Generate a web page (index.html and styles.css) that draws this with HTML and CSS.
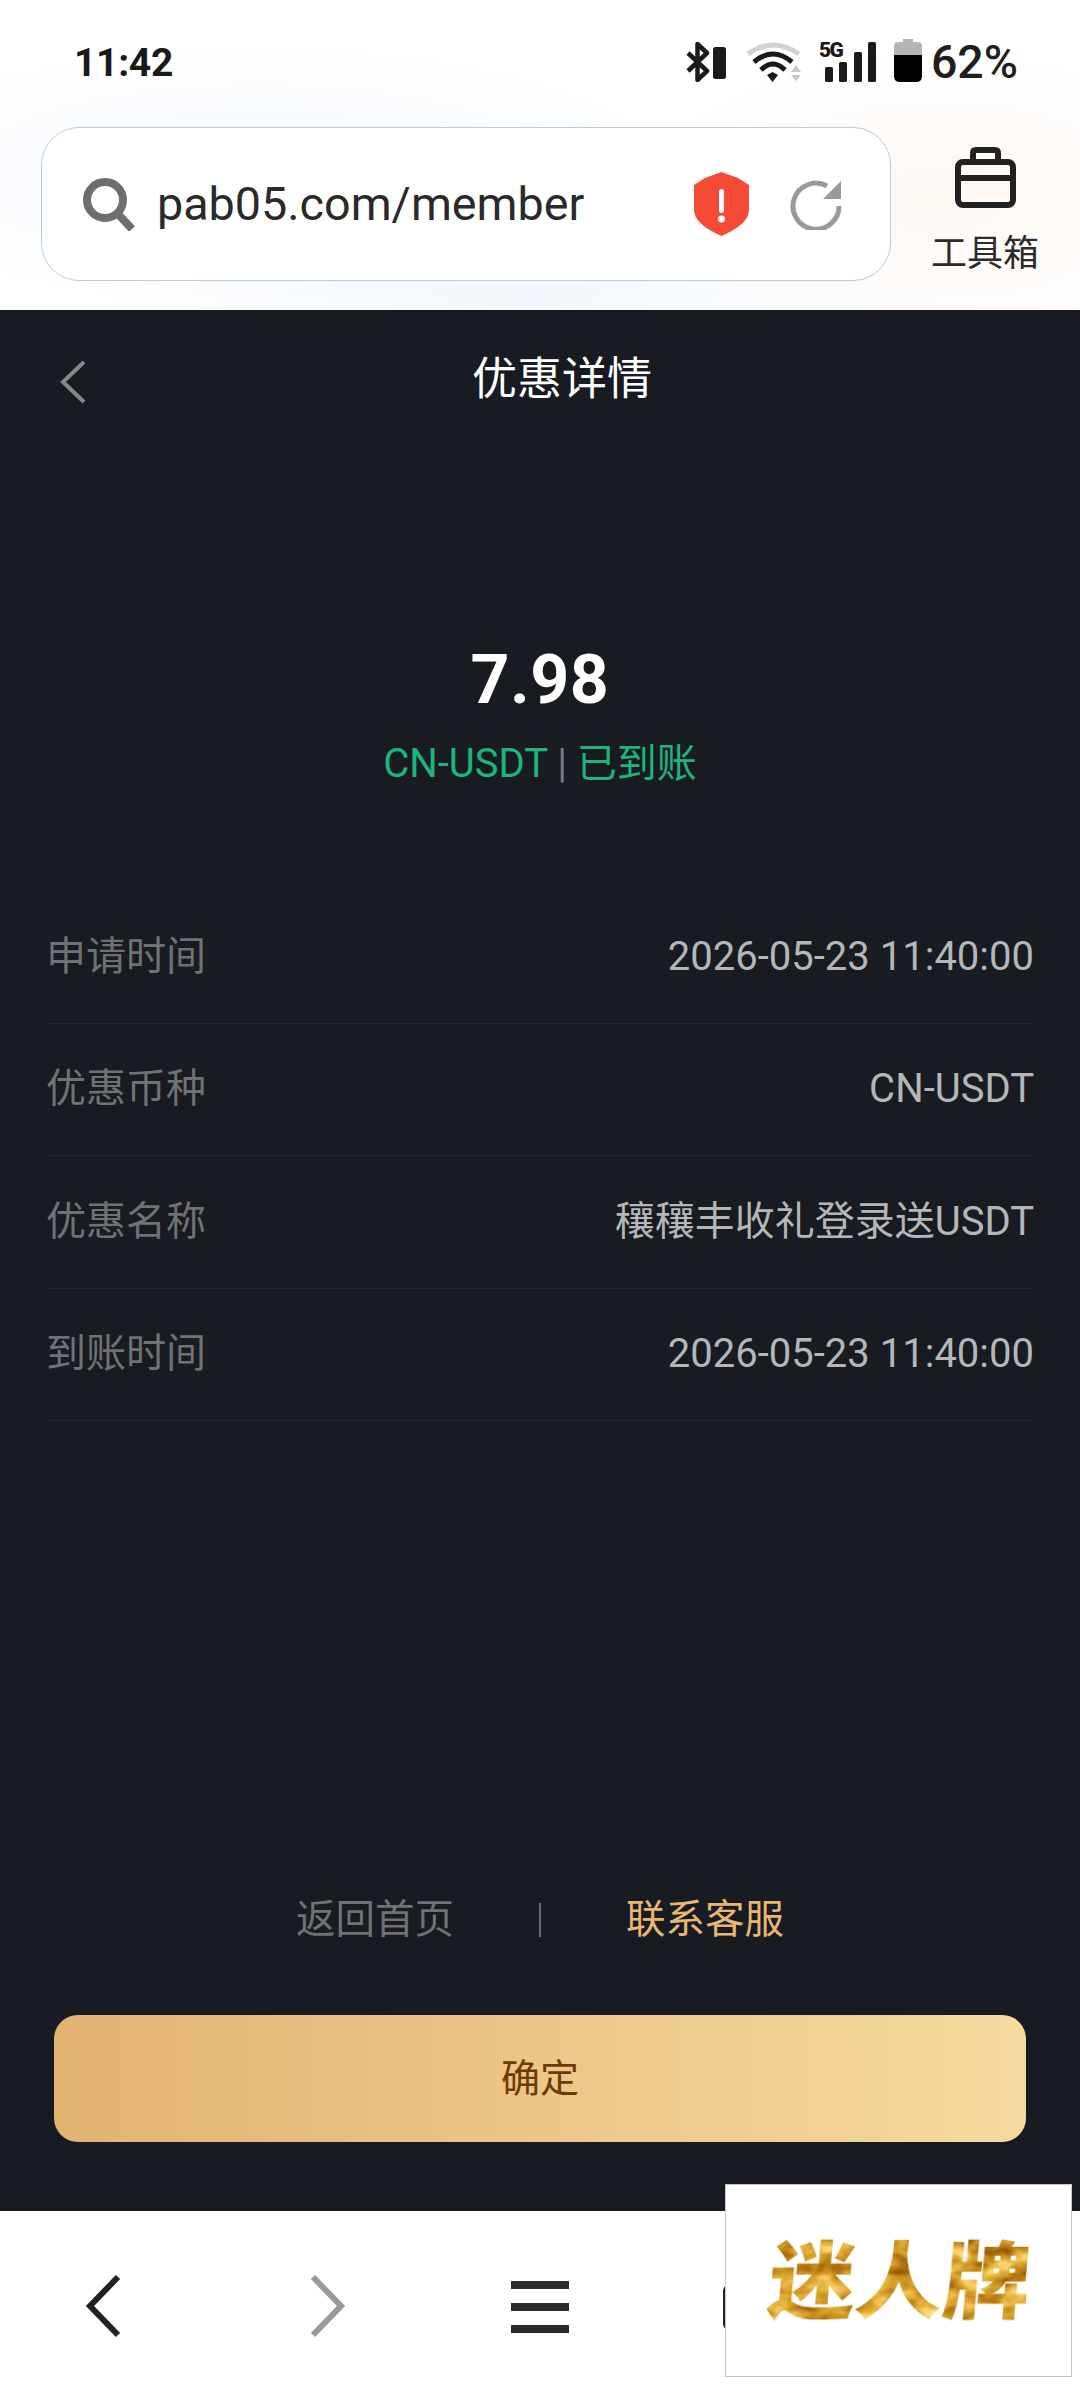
FILE: index.html
```html
<!DOCTYPE html>
<html lang="zh-CN">
<head>
<meta charset="utf-8">
<title>优惠详情</title>
<link rel="stylesheet" href="styles.css">
</head>
<body>
<div class="screen">
  <header class="top">
    <div class="status">
      <span class="time">11:42</span>
      <div class="sys">
        <svg class="ic-bt" viewBox="0 0 40 40"><path d="M2 11 21 29 11.500 38V2L21 11 2 29" fill="none" stroke="#1a1a1a" stroke-width="4.500" stroke-linejoin="round"/><rect x="27" y="5" width="13" height="32" rx="2.500" fill="#1a1a1a"/></svg>
        <svg class="ic-wifi" viewBox="0 0 55 40"><path d="M2 12Q27 -6 53 12" fill="none" stroke="#d2d2d2" stroke-width="5"/><path d="M8 20Q27 4 46 20" fill="none" stroke="#1a1a1a" stroke-width="5"/><path d="M15 28Q27 16 39 28" fill="none" stroke="#1a1a1a" stroke-width="5"/><path d="M21 33 26.500 30 32 33 26.500 40Z" fill="#1a1a1a"/><path d="M50 23 55 30H45ZM45 33H55L50 39Z" fill="#c8c8c8"/></svg>
        <div class="signal">
          <svg class="ic-signal" viewBox="0 0 57 40"><rect x="6" y="25" width="8" height="15" rx="1.500" fill="#1a1a1a"/><rect x="20" y="20" width="8" height="20" rx="1.500" fill="#1a1a1a"/><rect x="35" y="10" width="8" height="30" rx="1.500" fill="#1a1a1a"/><rect x="49" y="0" width="8" height="40" rx="1.500" fill="#1a1a1a"/></svg>
          <span class="five-g">5G</span>
        </div>
        <svg class="ic-batt" viewBox="0 0 28 43"><path d="M9 0H19V3H24Q28 3 28 7V16H0V7Q0 3 4 3H9Z" fill="#b4b4b4"/><path d="M0 16H28V37Q28 43 22 43H6Q0 43 0 37Z" fill="#000"/></svg>
        <span class="pct">62%</span>
      </div>
    </div>
    <div class="toolbar">
      <div class="urlbar">
        <svg class="ic-search" viewBox="0 0 53 53"><circle cx="22" cy="22" r="18" fill="none" stroke="#6e6e6e" stroke-width="8"/><path d="M34 35 49 51" stroke="#6e6e6e" stroke-width="8"/></svg>
        <span class="url">pab05.com/member</span>
        <svg class="ic-shield" viewBox="0 0 55 64"><path d="M27.500 0 44 6 55 13V38Q55 52 27.500 64 0 52 0 38V13L11 6Z" fill="#f44a36"/><rect x="25" y="17" width="5" height="24" rx="2.500" fill="#fff"/><circle cx="27.500" cy="47" r="3.500" fill="#fff"/></svg>
        <svg class="ic-reload" viewBox="0 0 52 51"><path d="M37 7A23 23 0 1 0 49 27" fill="none" stroke="#9a9a9a" stroke-width="5"/><path d="M51 2V20H33Z" fill="#9a9a9a"/></svg>
      </div>
      <div class="tool">
        <svg class="ic-tool" viewBox="0 0 61 61"><path d="M18 15V6Q18 3 21 3H40Q43 3 43 6V15" fill="none" stroke="#222" stroke-width="6"/><rect x="3" y="15" width="55" height="43" rx="5" fill="none" stroke="#222" stroke-width="6"/><path d="M3 31H58" stroke="#222" stroke-width="6"/></svg>
        <span class="tool-label">工具箱</span>
      </div>
    </div>
  </header>

  <main class="page">
    <div class="head">
      <svg class="ic-back" viewBox="0 0 30 46"><path d="M26 3 5 23 26 43" fill="none" stroke="#85878b" stroke-width="4"/></svg>
      <h1 class="title">优惠详情</h1>
    </div>
    <div class="amount">7.98</div>
    <div class="state"><span>CN-USDT</span> <i class="state-sep">|</i> <span>已到账</span></div>
    <dl class="rows">
      <div class="row"><dt>申请时间</dt><dd>2026-05-23 11:40:00</dd></div>
      <div class="row"><dt>优惠币种</dt><dd>CN-USDT</dd></div>
      <div class="row"><dt>优惠名称</dt><dd>穰穰丰收礼登录送USDT</dd></div>
      <div class="row"><dt>到账时间</dt><dd>2026-05-23 11:40:00</dd></div>
    </dl>
    <div class="links">
      <a class="link-home">返回首页</a>
      <span class="link-sep"></span>
      <a class="link-help">联系客服</a>
    </div>
    <button class="confirm">确定</button>
  </main>

  <nav class="nav">
    <svg class="nav-ic" viewBox="0 0 60 70"><path d="M40 6 12 35 40 64" fill="none" stroke="#222" stroke-width="6"/></svg>
    <svg class="nav-ic" viewBox="0 0 60 70"><path d="M19 6 47 35 19 64" fill="none" stroke="#999" stroke-width="6"/></svg>
    <svg class="nav-ic" viewBox="0 0 60 70"><path d="M1 14H59M1 36H59M1 58H59" stroke="#2a2a2a" stroke-width="8"/></svg>
    <span class="nav-tab"></span>
  </nav>

  <aside class="brand">
    <svg class="brand-art" viewBox="0 0 344 190">
      <defs>
        <filter id="gold" x="-5%" y="-5%" width="110%" height="110%" color-interpolation-filters="sRGB">
          <feTurbulence type="fractalNoise" baseFrequency="0.035 0.055" numOctaves="3" seed="7" result="noise"/>
          <feColorMatrix in="noise" type="matrix" values="1 0 0 0 0  1 0 0 0 0  1 0 0 0 0  0 0 0 0 1"/>
          <feComponentTransfer result="metal">
            <feFuncR type="table" tableValues="0.55 0.55 0.66 0.78 0.88 0.97 1 1"/>
            <feFuncG type="table" tableValues="0.30 0.30 0.42 0.56 0.68 0.82 0.90 0.95"/>
            <feFuncB type="table" tableValues="0.02 0.02 0.05 0.12 0.22 0.42 0.60 0.70"/>
          </feComponentTransfer>
          <feComposite in="metal" in2="SourceAlpha" operator="in"/>
        </filter>
      </defs>
      <text class="brand-text" x="51" y="127" textLength="262" lengthAdjust="spacingAndGlyphs" transform="skewX(-5)" filter="url(#gold)">迷人牌</text>
    </svg>
  </aside>
</div>
</body>
</html>
```
FILE: styles.css
```css
* { box-sizing: border-box; }
html, body { margin: 0; padding: 0; }
body {
  font-family: Roboto, "Noto Sans CJK SC", sans-serif;
  background: #fff;
}
.screen {
  position: relative;
  width: 1080px;
  height: 2400px;
  overflow: hidden;
  display: flex;
  flex-direction: column;
}

/* top browser chrome */
.top {
  height: 310px;
  flex: none;
  background:
    radial-gradient(420px 130px at 260px 175px, rgba(214, 230, 250, .32), transparent 100%),
    radial-gradient(300px 150px at 940px 200px, rgba(252, 236, 222, .38), transparent 100%),
    radial-gradient(420px 70px at 520px 292px, rgba(214, 230, 250, .30), transparent 100%),
    #fff;
}
.status {
  height: 124px;
  padding: 0 62px 0 74px;
  display: flex;
  align-items: center;
  justify-content: space-between;
}
.time {
  font-size: 39px;
  line-height: 40px;
  font-weight: 700;
  color: #1a1a1a;
  letter-spacing: -.3px;
  position: relative;
  top: 1px;
}
.sys {
  display: flex;
  align-items: flex-end;
  gap: 18px;
  margin-bottom: 3px;
}
.ic-bt { width: 40px; height: 40px; margin-right: 2px; }
.ic-wifi { width: 55px; height: 40px; }
.signal { position: relative; width: 57px; height: 40px; }
.ic-signal { display: block; width: 57px; height: 40px; }
.five-g {
  position: absolute;
  left: 0;
  top: -2px;
  font-size: 21px;
  line-height: 20px;
  font-weight: 900;
  color: #1a1a1a;
  letter-spacing: -1.5px;
}
.ic-batt { width: 28px; height: 43px; }
.pct {
  font-size: 46.500px;
  line-height: 43px;
  font-weight: 500;
  color: #1f1f1f;
  margin-left: -9px;
  position: relative;
  top: 2px;
}

.toolbar {
  display: flex;
  padding: 3px 0 0 41px;
}
.urlbar {
  width: 850px;
  height: 154px;
  padding: 0 48px 0 41px;
  display: flex;
  align-items: center;
  background: #fff;
  border: 1px solid #bccddc;
  border-radius: 38px;
}
.ic-search { width: 53px; height: 53px; flex: none; margin-top: 1px; }
.url {
  flex: 1;
  margin-left: 21px;
  font-size: 46.700px;
  line-height: 54px;
  color: #2a2a2a;
}
.ic-shield { width: 55px; height: 64px; flex: none; }
.ic-reload { width: 52px; height: 51px; flex: none; margin-left: 41px; }
.tool {
  width: 148px;
  height: 154px;
  margin-top: 20px;
  display: flex;
  flex-direction: column;
  align-items: center;
  margin-left: 20px;
}
.ic-tool { width: 61px; height: 61px; flex: none; }
.tool-label {
  margin-top: 26px;
  font-size: 36px;
  line-height: 40px;
  color: #2b2b2b;
}

/* dark page */
.page {
  flex: 1;
  display: flex;
  flex-direction: column;
  background: #181b22;
}
.head {
  height: 140px;
  padding: 0 44px 0 58px;
  display: flex;
  align-items: center;
}
.ic-back { width: 30px; height: 46px; flex: none; margin-top: 3px; }
.title {
  flex: 1;
  margin: 0;
  text-align: center;
  font-size: 45px;
  line-height: 50px;
  font-weight: 400;
  color: #fff;
}
.amount {
  margin-top: 196px;
  text-align: center;
  font-size: 68px;
  line-height: 68px;
  font-weight: 700;
  color: #fff;
  letter-spacing: .5px;
}
.state {
  margin-top: 25px;
  text-align: center;
  font-size: 40px;
  line-height: 50px;
  color: #1eb47a;
}
.state-sep { font-style: normal; color: #77797d; }
.rows {
  margin: 102px 46px 0;
}
.row {
  height: 132.500px;
  display: flex;
  align-items: center;
  justify-content: space-between;
  border-bottom: 1px solid #23262e;
}
.row dt {
  font-size: 40px;
  line-height: 48px;
  color: #6f7175;
}
.row dd {
  margin: 0;
  font-size: 40px;
  line-height: 48px;
  color: #b4b6ba;
}
.links {
  margin-top: auto;
  height: 50px;
  display: flex;
  align-items: center;
  justify-content: center;
  font-size: 39.500px;
  line-height: 50px;
}
.link-home { color: #6f7175; }
.link-help { color: #e8b774; }
.link-sep {
  width: 2px;
  height: 34px;
  margin: 0 85px;
  background: #66686c;
}
.confirm {
  display: block;
  width: 972px;
  height: 127px;
  margin: 70px 54px 69px;
  padding: 0 0 7px;
  border: 0;
  border-radius: 24px;
  background: linear-gradient(90deg, #e2b371, #f6da9f);
  font: inherit;
  font-size: 39px;
  color: #6d3b06;
}

/* bottom browser bar */
.nav {
  height: 189px;
  flex: none;
  background: #fff;
  display: grid;
  grid-template-columns: repeat(5, 216px);
  align-items: center;
  justify-items: center;
}
.nav-ic { width: 60px; height: 70px; }
.nav-tab {
  width: 66px;
  height: 45px;
  border: 4px solid #222;
  border-radius: 6px;
  margin-top: 4px;
}

/* floating logo */
.brand {
  position: absolute;
  left: 725px;
  top: 2184px;
  width: 347px;
  height: 193px;
  background: #fff;
  border: 1.500px solid #c6c6c6;
}
.brand-art { display: block; width: 344px; height: 190px; }
.brand-text {
  font-family: "Noto Sans CJK SC", sans-serif;
  font-size: 84px;
  font-weight: 900;
}
```
